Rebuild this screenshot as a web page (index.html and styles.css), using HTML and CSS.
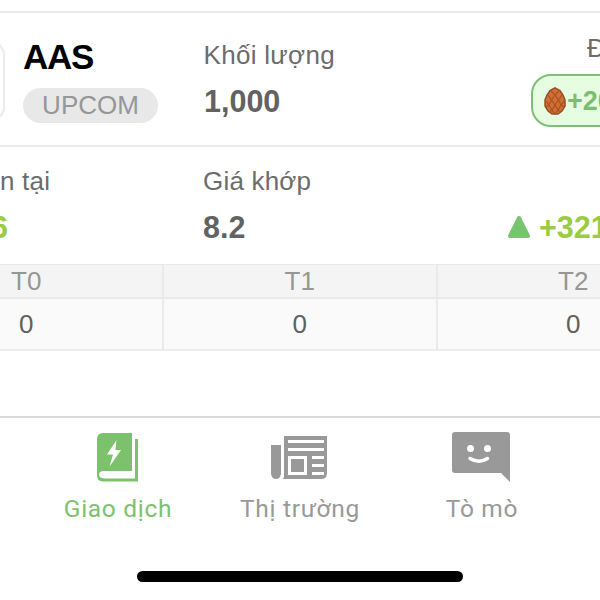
FILE: index.html
```html
<!DOCTYPE html>
<html lang="vi">
<head>
    <meta charset="UTF-8">
    <title>Giao dịch</title>
    <link rel="stylesheet" href="styles.css">
</head>
<body>
<main>
    <section class="row stock">
        <div class="logo"></div>
        <div class="symbol">
            <h1>AAS</h1>
            <span class="exchange">UPCOM</span>
        </div>
        <div class="field">
            <p class="label volume">Khối lượng</p>
            <p class="value">1,000</p>
        </div>
        <div class="reward">
            <p class="label">Đ</p>
            <div class="reward-pill">
                <svg class="cone" viewBox="0 0 22 28">
                    <path d="M11 .8 16 3.500 19 8 21 13 21 19 18 24 14 27H8L4 24 1 19 1 13 3 8 6 3.500Z" fill="#d56f2f" stroke="#94502c" stroke-width="1.500"/>
                    <path d="M7 4 11 8 15 4M4 8 7.500 13 11 8 14.500 13 18 8M2 14 5 18 7.500 13 11 18 14.500 13 17 18 20 14M2 20 5 18 8 23 11 18 14 23 17 18 20 20M5 25 8 23 11 27 14 23 17 25" fill="none" stroke="#a4532a" stroke-width="1.200"/>
                </svg>
                <span>+20</span>
            </div>
        </div>
    </section>
    <section class="row price">
        <div class="current">
            <p class="label">n tại</p>
            <p class="value up">6</p>
        </div>
        <div class="field">
            <p class="label">Giá khớp</p>
            <p class="value">8.2</p>
        </div>
        <div class="profit">
            <svg class="arrow" viewBox="0 0 22 22">
                <path d="M11 2 20 20H2Z" fill="#77c56f" stroke="#77c56f" stroke-width="4" stroke-linejoin="round"/>
            </svg>
            <p class="value up">+321</p>
        </div>
    </section>
    <section class="settlement">
        <div class="head">T0</div>
        <div class="head">T1</div>
        <div class="head">T2</div>
        <div class="cell">0</div>
        <div class="cell">0</div>
        <div class="cell">0</div>
    </section>
</main>
<nav>
    <a class="tab active">
        <svg viewBox="0 0 60 52">
            <path fill="currentColor" fill-rule="evenodd" d="M16 1H45V39H17Q12 39 12 42.500T17 46.500H48V7H51V49.500H16Q10 49.500 10 43V7Q10 1 16 1Z"/>
            <path fill="#fff" d="M29.500 8 20 22.500H26L22.500 34.500 34 18H28.500Z"/>
        </svg>
        <span>Giao dịch</span>
    </a>
    <a class="tab">
        <svg viewBox="0 0 60 52">
            <path fill="currentColor" d="M2 13H12V42Q11 47 7 47T2 42Z"/>
            <path fill="currentColor" fill-rule="evenodd" d="M15 4H58V41Q58 47 52 47H14L15 45ZM19 8V11H55V8ZM19 16V19H55V16ZM19 24V43H38V24ZM43 24V27H55V24ZM43 32V35H55V32ZM43 40V43H55V40Z"/>
            <path fill="currentColor" d="M22 27H35V40H22Z"/>
        </svg>
        <span>Thị trường</span>
    </a>
    <a class="tab">
        <svg viewBox="0 0 60 52">
            <path fill="currentColor" d="M4 0H56Q59 0 59 3V50L50 41H4Q1 41 1 38V3Q1 0 4 0Z"/>
            <circle cx="19.500" cy="16.500" r="3.500" fill="#fff"/>
            <circle cx="36.500" cy="16.500" r="3.500" fill="#fff"/>
            <path d="M19 26.500Q28 32 36.500 26.500" fill="none" stroke="#fff" stroke-width="3.500" stroke-linecap="round"/>
        </svg>
        <span>Tò mò</span>
    </a>
</nav>
<div class="home-bar"></div>
</body>
</html>
```
FILE: styles.css
```css
* {
    box-sizing: border-box;
}
body {
    font-family: "Liberation Sans", Arial, sans-serif;
    margin: 0;
    width: 600px;
    height: 600px;
    overflow: hidden;
    background: #fff;
    color: #626262;
}
main {
    height: 416px;
    padding-top: 11px;
    overflow: hidden;
}
h1, p {
    margin: 0;
}
.row {
    display: grid;
    border-top: 2px solid #ebebeb;
}
.stock {
    height: 134px;
    grid-template-columns: 5px 199px 327px 120px;
}
.logo {
    height: 80px;
    margin: 28px 0 0 -75px;
    border: 2px solid #ebebeb;
    border-radius: 14px;
}
.symbol {
    padding: 24px 0 0 18px;
}
.symbol h1 {
    font-size: 35px;
    line-height: 40px;
    letter-spacing: -1.3px;
    color: #000;
}
.exchange {
    display: block;
    width: 135px;
    height: 35px;
    margin-top: 11px;
    border-radius: 18px;
    background: #e8e8e8;
    color: #969696;
    font-size: 26px;
    line-height: 35px;
    text-align: center;
}
.field {
    padding-top: 26px;
}
.label {
    font-size: 26px;
    line-height: 32px;
    letter-spacing: 0.2px;
    white-space: nowrap;
    color: #6c6c6c;
}
.volume {
    letter-spacing: 0.3px;
    margin-left: -0.5px;
}
.value {
    font-size: 30.5px;
    line-height: 36px;
    font-weight: bold;
    margin-top: 12px;
}
.value.up {
    color: #9acb42;
}
.reward {
    padding-top: 19px;
}
.reward .label {
    padding-left: 56px;
}
.reward-pill {
    display: flex;
    align-items: center;
    height: 53px;
    margin-top: 10px;
    padding-left: 11px;
    border: 2px solid #7fbe76;
    border-radius: 20px;
    background: #e6fde1;
    color: #7dbd72;
    font-size: 27px;
    font-weight: bold;
}
.reward-pill span {
    padding-top: 2px;
}
.cone {
    width: 22px;
    height: 28px;
    margin-right: 1px;
}
.price {
    height: 119px;
    grid-template-columns: 203px 305px 160px;
}
.price .field, .current {
    padding-top: 18px;
}
.current .value {
    margin-left: -9px;
}
.profit {
    display: flex;
    align-items: center;
    padding-top: 42px;
}
.profit .value {
    margin: 0 0 0 9px;
}
.arrow {
    width: 22px;
    height: 22px;
}
.settlement {
    display: grid;
    grid-template-columns: repeat(3, 273.5px);
    grid-template-rows: 34px 50px;
    width: 820.5px;
    margin-left: -109.5px;
    border-top: 1px solid #e8e8e8;
    border-bottom: 2px solid #ececec;
    text-align: center;
}
.head, .cell {
    border-right: 2px solid #eaeaea;
    font-size: 26px;
}
.head {
    background: #f4f4f4;
    border-bottom: 2px solid #e9e9e9;
    line-height: 33px;
    color: #969696;
}
.cell {
    background: #fafafa;
    line-height: 50px;
    color: #606060;
}
nav {
    display: flex;
    height: 155px;
    padding: 14px 28px 0 26px;
    border-top: 2px solid #dadada;
}
.tab {
    flex: 1;
    display: flex;
    flex-direction: column;
    align-items: center;
    color: #999;
    font-family: Roboto, sans-serif;
    font-size: 24.5px;
    line-height: 32px;
    letter-spacing: 0.7px;
}
.tab span {
    padding-left: 2px;
}
.tab svg {
    width: 60px;
    height: 52px;
    margin-bottom: 9px;
}
.tab.active {
    color: #7cc26d;
}
.home-bar {
    width: 326px;
    height: 11px;
    margin: 0 auto;
    border-radius: 6px;
    background: #000;
}
```
